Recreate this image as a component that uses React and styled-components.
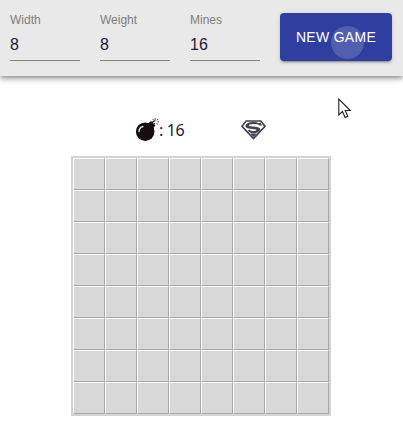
import React from "react";
import styled, { createGlobalStyle } from "styled-components";

const GlobalStyle = createGlobalStyle`
  * { box-sizing: border-box; }
  body {
    margin: 0;
    background: #fff;
    font-family: "Liberation Sans", Arial, sans-serif;
    overflow: hidden;
  }
`;

const Page = styled.div`
  position: relative;
  height: 425px;
  display: flex;
  flex-direction: column;
`;

const Toolbar = styled.header`
  display: flex;
  gap: 20px;
  height: 76px;
  padding: 13px 11px 0 10px;
  background: #e9e9e9;
  box-shadow: 0 2px 4px -1px rgba(0, 0, 0, 0.3), 0 4px 5px 0 rgba(0, 0, 0, 0.16),
    0 1px 8px 0 rgba(0, 0, 0, 0.12);
`;

const Field = styled.label`
  display: flex;
  flex-direction: column;
  width: 70px;
  height: 48px;
  border-bottom: 1px solid #858585;
`;

const FieldLabel = styled.span`
  font-size: 12px;
  line-height: 14px;
  color: #7f7f7f;
`;

const FieldValue = styled.span`
  margin-top: 8px;
  font-size: 16px;
  line-height: 20px;
  color: #1d1d35;
`;

const NewGameButton = styled.button`
  position: relative;
  width: 112px;
  height: 48px;
  padding: 0;
  border: 0;
  border-radius: 4px;
  background: #303f9f;
  color: #fff;
  font: 14px/24px "Liberation Sans", Arial, sans-serif;
  letter-spacing: 0.3px;
  white-space: nowrap;
  box-shadow: 0 3px 1px -2px rgba(0, 0, 0, 0.2), 0 2px 2px 0 rgba(0, 0, 0, 0.14),
    0 1px 5px 0 rgba(0, 0, 0, 0.12);
`;

const Ripple = styled.span`
  position: absolute;
  left: 51px;
  top: 13px;
  width: 33px;
  height: 33px;
  border-radius: 50%;
  background: rgba(255, 255, 255, 0.17);
`;

const Status = styled.div`
  display: flex;
  align-items: center;
  height: 30px;
  margin: 39px 0 0 135px;
`;

const Count = styled.span`
  width: 82px;
  font: 16px/22px "Noto Sans", "Open Sans", sans-serif;
  letter-spacing: -0.4px;
  color: #1d1d35;
`;

const Board = styled.div`
  display: grid;
  grid-template-columns: repeat(8, 32px);
  grid-auto-rows: 32px;
  width: 260px;
  margin: 11px 0 0 71px;
  border: 2px solid #d3d3d3;
`;

const Cell = styled.div`
  background: #d8d8d8;
  border: 1px solid;
  border-color: #fff #a9a9a9 #a9a9a9 #fff;
`;

const Pointer = styled.svg`
  position: absolute;
  left: 338px;
  top: 98px;
`;

const BombIcon = () => (
  <svg width="24" height="24" viewBox="0 0 24 24">
    <circle cx="10.2" cy="13.7" r="9.3" fill="#160b10" />
    <path d="M13 5.5 16 3l4.5 4.5-2.7 3z" fill="#160b10" />
    <path d="M17.5 5Q18 2.5 20.5 3" fill="none" stroke="#160b10" strokeWidth="1.2" />
    <path d="M4 13.5Q4.2 9.5 8 8.5" fill="none" stroke="#eee" strokeWidth="1.3" strokeLinecap="round" />
    <path
      d="M20.2.2v1.6M22.8 1.2l-.9 1M22.4 3.7h1.4M21.7 5.2l1 1.3M19.6 5v1.4M17.5.9l1 1"
      stroke="#342a30"
      strokeWidth="1"
    />
  </svg>
);

const HeroIcon = () => (
  <svg width="25" height="20" viewBox="0 0 25 20">
    <path d="M5.2 1h14.6L24 6.3 12.5 18.6 1 6.3z" fill="#fff" stroke="#41414d" strokeWidth="1.7" />
    <path
      d="M19.5 2.5 21 5.4h-2.5C17.6 4.2 15 3.8 12 3.9c-3 .1-4.3.7-4.2 1.5.1.9 2.8.9 6.5 1.3 4.5.5 5.8 1.9 4.7 3.6-1.3 2.1-4 3-7.2 2.8-2 0-3.5-.7-5-2.3l1.4-1.4c1.2 1.4 3 1.8 4.8 1.7 1.7-.1 2.7-.7 2.5-1.3-.3-.7-3-.7-6.2-1.1C5.4 8.2 3.7 7 4.7 5 5.7 3 8.3 2 12 2c2.6 0 4.5.4 5.7 1.2z"
      fill="#41414d"
    />
    <path d="M9 13.4h7l-3.5 3.7z" fill="#41414d" />
  </svg>
);

const fields = [
  ["Width", "8"],
  ["Weight", "8"],
  ["Mines", "16"],
];

export default function App() {
  return (
    <Page>
      <GlobalStyle />
      <Toolbar>
        {fields.map(([label, value]) => (
          <Field key={label}>
            <FieldLabel>{label}</FieldLabel>
            <FieldValue>{value}</FieldValue>
          </Field>
        ))}
        <NewGameButton>
          NEW GAME
          <Ripple />
        </NewGameButton>
      </Toolbar>
      <Status>
        <BombIcon />
        <Count>: 16</Count>
        <HeroIcon />
      </Status>
      <Board>
        {Array.from({ length: 64 }, (_, i) => (
          <Cell key={i} />
        ))}
      </Board>
      <Pointer width="14" height="21" viewBox="0 0 14 21">
        <path
          d="M.8 1v16l3.7-3.5 2.6 6 2.7-1.2-2.6-5.8h5.1z"
          fill="#fff"
          stroke="#20202a"
          strokeWidth="1.1"
        />
      </Pointer>
    </Page>
  );
}
